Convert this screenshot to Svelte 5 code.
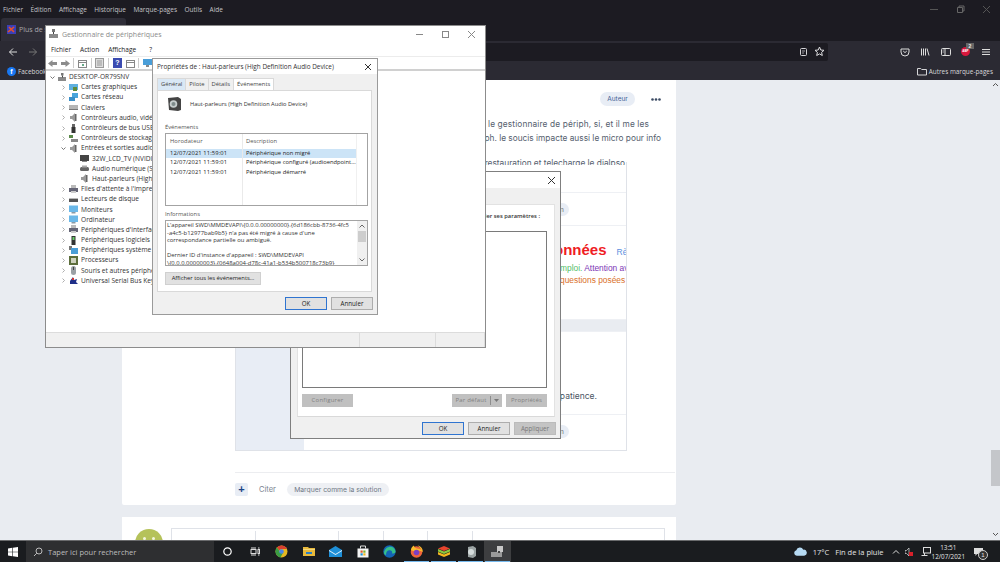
<script>
  const menu = ['Fichier','Édition','Affichage','Historique','Marque-pages','Outils','Aide'];
  const tree = [
    {l:1,c:'>',k:'disp',t:'Cartes graphiques'},
    {l:1,c:'>',k:'net',t:'Cartes réseau'},
    {l:1,c:'>',k:'kbd',t:'Claviers'},
    {l:1,c:'>',k:'spk',t:'Contrôleurs audio, vidéo et jeu'},
    {l:1,c:'>',k:'usb',t:'Contrôleurs de bus USB'},
    {l:1,c:'>',k:'sto',t:'Contrôleurs de stockage'},
    {l:1,c:'v',k:'spk',t:'Entrées et sorties audio'},
    {l:2,c:'',k:'tv',t:'32W_LCD_TV (NVIDIA)'},
    {l:2,c:'',k:'dig',t:'Audio numérique (S/PDIF)'},
    {l:2,c:'',k:'spk',t:'Haut-parleurs (High Definition)'},
    {l:1,c:'>',k:'prn',t:"Files d'attente à l'impression"},
    {l:1,c:'>',k:'dsk',t:'Lecteurs de disque'},
    {l:1,c:'>',k:'disp2',t:'Moniteurs'},
    {l:1,c:'>',k:'disp2',t:'Ordinateur'},
    {l:1,c:'>',k:'prn',t:"Périphériques d'interface"},
    {l:1,c:'>',k:'soft',t:'Périphériques logiciels'},
    {l:1,c:'>',k:'sys',t:'Périphériques système'},
    {l:1,c:'>',k:'cpu',t:'Processeurs'},
    {l:1,c:'>',k:'mouse',t:'Souris et autres périphériques'},
    {l:1,c:'>',k:'uni',t:'Universal Serial Bus Keyboard'},
  ];
  const rows = [
    ['12/07/2021 11:59:01','Périphérique non migré',true],
    ['12/07/2021 11:59:01','Périphérique configuré (audioendpoint...',false],
    ['12/07/2021 11:59:01','Périphérique démarré',false],
  ];
  const editorCells = [84,83,45,44,45];
</script>

<div class="screen">
  <!-- Firefox -->
  <header class="ff">
    <div class="menubar">
      {#each menu as m}<span>{m}</span>{/each}
      <div class="winctl">
        <svg width="9" height="9" viewBox="0 0 9 9"><path d="M0 4.500h8" stroke="#555" /></svg>
        <svg width="9" height="9" viewBox="0 0 9 9" fill="none"><path d="M1.500 2.500h5v5h-5zM3 2.500V1h5v5H6.500" stroke="#666" /></svg>
        <svg width="9" height="9" viewBox="0 0 9 9"><path d="M1 1l7 7M8 1l-7 7" stroke="#555" /></svg>
      </div>
    </div>
    <div class="tabs">
      <div class="tab">
        <svg width="9" height="9" viewBox="0 0 9 9"><rect width="9" height="9" fill="#3a3fb8" /><path d="M1 7L7 2M2 2l5 5" stroke="#e8502a" stroke-width="1.600" /></svg>
        <span>Plus de son</span>
      </div>
    </div>
    <div class="toolbar">
      <svg class="nav" width="10" height="10" viewBox="0 0 10 10" fill="none"><path d="M9 5H1.500M5 1.500L1.500 5 5 8.500" stroke="#ddd" /></svg>
      <svg class="nav" width="10" height="10" viewBox="0 0 10 10" fill="none"><path d="M1 5h7.500M5 1.500L8.500 5 5 8.500" stroke="#777" /></svg>
      <div class="url">
        <svg width="9" height="10" viewBox="0 0 9 10" fill="none"><rect x="1.500" y="1.500" width="6" height="7" rx="1" stroke="#d5d5d8" /><path d="M3 4h3M3 6h2" stroke="#d5d5d8" stroke-width=".7" /></svg>
        <svg width="11" height="11" viewBox="0 0 11 11" fill="none"><path d="M5.500 1l1.300 3 3.200.3-2.400 2.100.7 3.100-2.800-1.600-2.800 1.600.7-3.100L1 4.300 4.200 4z" stroke="#e0e0e3" /></svg>
      </div>
      <div class="tools">
        <svg width="10" height="10" viewBox="0 0 10 10" fill="none"><path d="M1 2h8v3a4 4 0 0 1-8 0zM3.200 4L5 5.600 6.800 4" stroke="#ddd" /></svg>
        <svg width="10" height="10" viewBox="0 0 10 10" fill="none"><path d="M1.500 1.500v7M3.500 1.500v7M5.500 1.500v7M7 1.500l2 7" stroke="#ddd" /></svg>
        <svg width="10" height="10" viewBox="0 0 10 10" fill="none"><rect x=".5" y="1.500" width="9" height="7" rx="1" stroke="#ddd" /><path d="M4 1.500v7" stroke="#ddd" /><path d="M1.500 3h1.500M1.500 5h1.500" stroke="#ddd" stroke-width=".7" /></svg>
        <div class="abp"><span class="abpdot">ABP</span><span class="abpbadge">2</span></div>
        <svg width="10" height="10" viewBox="0 0 10 10" fill="none"><path d="M1 2.500h8M1 5h8M1 7.500h8" stroke="#ddd" /></svg>
      </div>
    </div>
    <div class="bookmarks">
      <span class="bm"><span class="fb">f</span>Facebook</span>
      <span class="bm">
        <svg width="10" height="9" viewBox="0 0 10 9" fill="none"><path d="M.5 1.500h3.200l1 1h4.800v5.500H.5z" stroke="#d5d5d8" /></svg>
        Autres marque-pages
      </span>
    </div>
  </header>

  <!-- Page -->
  <main class="page">
    <article class="card">
      <div class="posthead">
        <span class="auteur">Auteur</span>
        <svg class="dots" width="10" height="3" viewBox="0 0 10 3"><circle cx="1.500" cy="1.500" r="1.300" fill="#3a4a63" /><circle cx="5" cy="1.500" r="1.300" fill="#3a4a63" /><circle cx="8.500" cy="1.500" r="1.300" fill="#3a4a63" /></svg>
      </div>
      <p class="line l1">s le gestionnaire de périph, si, et il me les</p>
      <p class="line l2">ph. le soucis impacte aussi le micro pour info</p>
      <section class="inner">
        <aside class="side"></aside>
        <div class="innermain">
          <div class="ib ib1"><p class="line l3">restauration et telecharge le dialpso</p></div>
          <div class="ib ib2"><span class="minipill">n</span></div>
          <div class="ib ib3">
            <div class="bigline"><span class="red">onnées</span><span class="blue">Règles</span></div>
            <div class="cline first"><span class="green">mploi.</span> <span class="purple">Attention avec</span></div>
            <div class="cline"><span class="orange">questions posées</span></div>
          </div>
          <div class="ib gray"></div>
          <div class="ib ib4"><span class="pat">patience.</span></div>
          <div class="ib ib5"><span class="minipill">n</span></div>
        </div>
      </section>
      <div class="actions">
        <span class="plus">+</span>
        <span class="citer">Citer</span>
        <span class="sol">Marquer comme la solution</span>
      </div>
    </article>
    <article class="card2">
      <span class="avatar"><i></i><i></i></span>
      <div class="editor">
        {#each editorCells as w}<span class="cell" style="width:{w}px"></span>{/each}
      </div>
    </article>
    <div class="scroll">
      <svg class="su" width="7" height="5" viewBox="0 0 7 5" fill="none"><path d="M1 4l2.500-2.500L6 4" stroke="#555" /></svg>
      <div class="thumb"></div>
      <svg class="sd" width="7" height="5" viewBox="0 0 7 5" fill="none"><path d="M1 1l2.500 2.500L6 1" stroke="#555" /></svg>
    </div>
  </main>

  <!-- Sound dialog -->
  <div class="win sound">
    <div class="stitle"><svg width="9" height="9" viewBox="0 0 9 9"><path d="M1 1l7 7M8 1l-7 7" stroke="#333" /></svg></div>
    <div class="spanel">
      <div class="stext">Sélectionner un périphérique de lecture ci-dessous pour modifier ses paramètres :</div>
      <div class="slist"></div>
      <div class="sbtns">
        <span class="dis b1">Configurer</span>
        <span class="grow"></span>
        <span class="dis b2">Par défaut<i></i><svg width="5" height="3" viewBox="0 0 5 3"><path d="M0 0h5L2.500 3z" fill="#777" /></svg></span>
        <span class="dis b3">Propriétés</span>
      </div>
    </div>
    <div class="sfoot">
      <span class="btn ok">OK</span><span class="btn">Annuler</span><span class="btn dis2">Appliquer</span>
    </div>
  </div>

  <!-- Device manager -->
  <div class="win dev">
    <div class="dtitle">
      <svg width="9" height="10" viewBox="0 0 9 10"><rect x="3" y="0" width="3" height="3" fill="#777" /><rect x="0" y="5" width="9" height="4" fill="#8a8a8a" /><rect x="4" y="3" width="1" height="2" fill="#444" /></svg>
      <span class="dt">Gestionnaire de périphériques</span>
      <div class="dctl">
        <svg width="9" height="9" viewBox="0 0 9 9"><path d="M1 4.500h7" stroke="#888" /></svg>
        <svg width="9" height="9" viewBox="0 0 9 9" fill="none"><rect x="1.500" y="1.500" width="6" height="6" stroke="#888" /></svg>
        <svg width="9" height="9" viewBox="0 0 9 9"><path d="M1 1l7 7M8 1l-7 7" stroke="#888" /></svg>
      </div>
    </div>
    <div class="dmenu"><span>Fichier</span><span>Action</span><span>Affichage</span><span>?</span></div>
    <div class="dtool">
      <svg width="9" height="9" viewBox="0 0 9 9"><path d="M0 4.500L4.500 1v2H9v3H4.500v2z" fill="#8b8b8b" /></svg>
      <svg width="9" height="9" viewBox="0 0 9 9"><path d="M9 4.500L4.500 1v2H0v3h4.500v2z" fill="#8b8b8b" /></svg>
      <i></i>
      <svg width="9" height="9" viewBox="0 0 9 9" fill="none"><rect x=".5" y="1.500" width="8" height="7" stroke="#888" /><path d="M.5 3.500h8" stroke="#888" /><rect x="4" y="5" width="2" height="2" fill="#6a8" /></svg>
      <i></i>
      <svg width="9" height="10" viewBox="0 0 9 10" fill="none"><rect x=".5" y=".5" width="8" height="9" fill="#ddd" stroke="#999" /><path d="M2 3h5M2 5h5M2 7h5" stroke="#999" /></svg>
      <i></i>
      <span class="help">?</span>
      <svg width="9" height="9" viewBox="0 0 9 9" fill="none"><rect x=".5" y="1.500" width="8" height="7" stroke="#888" /><path d="M.5 3.500h8" stroke="#888" /></svg>
      <i></i>
      <svg width="10" height="10" viewBox="0 0 10 10"><rect x="0" y="1" width="9" height="6" fill="#4a9ed8" /><rect x="3" y="7" width="3" height="2" fill="#888" /></svg>
    </div>
    <div class="dtree">
      <div class="root">
        <svg class="ch" width="5" height="5" viewBox="0 0 5 5" fill="none"><path d="M.5 1.500L2.500 3.500 4.500 1.500" stroke="#555" stroke-width=".8" /></svg>
        <svg width="8" height="9" viewBox="0 0 8 9"><rect x="3" y="0" width="2.500" height="2.500" fill="#777" /><rect x="0" y="4" width="8" height="4" fill="#8a8a8a" /><rect x="4" y="2.500" width="1" height="2" fill="#444" /></svg>
        <span>DESKTOP-OR79SNV</span>
      </div>
      {#each tree as r}
        <div class="row" class:l2={r.l === 2}>
          {#if r.l === 1}
            {#if r.c === 'v'}
              <svg class="ch" width="5" height="5" viewBox="0 0 5 5" fill="none"><path d="M.5 1.500L2.500 3.500 4.500 1.500" stroke="#555" stroke-width=".8" /></svg>
            {:else}
              <svg class="ch" width="5" height="5" viewBox="0 0 5 5" fill="none"><path d="M1.500.5L3.500 2.500 1.500 4.500" stroke="#999" stroke-width=".8" /></svg>
            {/if}
          {/if}
          <svg class="ic" width="9" height="9" viewBox="0 0 9 9">
            {#if r.k === 'disp'}<rect y="1" width="9" height="6" fill="#5fb0e0" /><rect x="4" y="4" width="4" height="4" fill="#5d8a3a" />
            {:else if r.k === 'net'}<rect x="3" y="0" width="6" height="5" fill="#4aa5dc" /><rect y="4" width="6" height="4" fill="#3a8fc8" />
            {:else if r.k === 'kbd'}<rect y="2" width="9" height="5" fill="#b5b5b5" /><rect y="6" width="9" height="1" fill="#777" />
            {:else if r.k === 'spk'}<path d="M1 3h2l3-3v9L3 6H1z" fill="#9a9a9a" /><rect x="6" y="1" width="1.500" height="7" fill="#666" />
            {:else if r.k === 'usb'}<rect x="3" y="0" width="3" height="3" fill="#666" /><rect x="2.500" y="3" width="4" height="6" fill="#333" />
            {:else if r.k === 'sto'}<rect x="0" y="1" width="4" height="3" fill="#5b8a4a" /><rect x="2" y="5" width="7" height="3" fill="#888" />
            {:else if r.k === 'tv'}<rect y="1" width="9" height="6" fill="#444" /><rect x="2" y="7" width="5" height="1" fill="#888" />
            {:else if r.k === 'dig'}<rect y="3" width="9" height="4" rx="1.500" fill="#666" /><rect x="2" y="1.500" width="5" height="2" fill="#aaa" />
            {:else if r.k === 'prn'}<rect x="2" y="0" width="5" height="3" fill="#bbb" /><rect y="3" width="9" height="4" fill="#667" /><rect x="2" y="6" width="5" height="2" fill="#ccc" />
            {:else if r.k === 'dsk'}<rect y="4" width="9" height="3" fill="#555" /><rect y="3" width="9" height="1" fill="#bbb" />
            {:else if r.k === 'disp2'}<rect y="0.500" width="9" height="6.500" fill="#6bb8e8" /><rect x="2.500" y="7" width="4" height="1.500" fill="#8a9aa5" />
            {:else if r.k === 'soft'}<rect x="2.500" y="0" width="4" height="9" fill="#333" /><rect x="3.500" y="1" width="2" height="3" fill="#6c6" />
            {:else if r.k === 'sys'}<rect y="0" width="3" height="4" fill="#777" /><rect x="2" y="2" width="7" height="6" fill="#4a9ed8" />
            {:else if r.k === 'cpu'}<rect width="9" height="9" fill="#5c6e3c" /><rect x="2" y="2" width="5" height="5" fill="#cfd2c0" />
            {:else if r.k === 'mouse'}<rect x="2" y="0" width="5" height="9" rx="2.500" fill="#9aa0a5" /><rect x="4" y="1" width="1" height="3" fill="#444" />
            {:else}<path d="M1 5l3-4 1 3 3-1-1 3 2 2H1z" fill="#1f2f88" /><rect x="3" y="2" width="2" height="2" fill="#c33" />
            {/if}
          </svg>
          <span>{r.t}</span>
        </div>
      {/each}
    </div>
    <div class="dstatus"><span class="c1"></span><span class="c2"></span><span class="c3"></span></div>
  </div>

  <!-- Properties -->
  <div class="win props">
    <div class="ptitle"><span>Propriétés de : Haut-parleurs (High Definition Audio Device)</span>
      <svg width="8" height="8" viewBox="0 0 8 8"><path d="M1 1l6 6M7 1L1 7" stroke="#333" /></svg>
    </div>
    <div class="ptabs">
      <span class="pt gen">Général</span><span class="pt">Pilote</span><span class="pt">Détails</span><span class="pt act">Événements</span>
    </div>
    <div class="ppanel">
      <div class="phead">
        <svg width="15" height="15" viewBox="0 0 15 15"><path d="M1 2l10-1 3 2v11l-3 1-9-1z" fill="#444" /><circle cx="6.500" cy="8" r="3.800" fill="#c5cccc" /><circle cx="6.500" cy="8" r="2" fill="#7d8a8a" /></svg>
        <span>Haut-parleurs (High Definition Audio Device)</span>
      </div>
      <div class="plabel ev">Événements</div>
      <div class="plist">
        <div class="pmain">
          <div class="prow phrow"><span>Horodateur</span><span>Description</span></div>
          {#each rows as r}
            <div class="prow" class:sel={r[2]}><span>{r[0]}</span><span>{r[1]}</span></div>
          {/each}
          <i class="vl"></i>
        </div>
      </div>
      <div class="plabel inf">Informations</div>
      <div class="pinfo">
        <div class="ptext">L'appareil SWD\MMDEVAPI\{'{'}0.0.0.00000000{'}'}.{'{'}6d186cbb-8736-4fc5<br />-a4c5-b12977bab9b5{'}'} n'a pas été migré à cause d'une<br />correspondance partielle ou ambiguë.<br /><br />Dernier ID d'instance d'appareil : SWD\MMDEVAPI<br />\{'{'}0.0.0.00000003{'}'}.{'{'}0648a004-d78c-41a1-b534b500718c73b9{'}'}</div>
        <div class="psb">
          <svg width="6" height="4" viewBox="0 0 6 4" fill="none"><path d="M.5 3.500L3 1l2.500 2.500" stroke="#444" stroke-width=".8" /></svg>
          <i></i>
          <svg class="dn" width="6" height="4" viewBox="0 0 6 4" fill="none"><path d="M.5.5L3 3 5.500.5" stroke="#444" stroke-width=".8" /></svg>
        </div>
      </div>
      <span class="btn showall">Afficher tous les événements...</span>
    </div>
    <div class="pfoot"><span class="btn ok">OK</span><span class="btn">Annuler</span></div>
  </div>

  <!-- Taskbar -->
  <footer class="task">
    <svg class="start" width="10" height="10" viewBox="0 0 10 10"><path d="M0 1.400L4.300.8v3.900H0zM4.900.7L10 0v4.700H4.900zM0 5.300h4.300v3.900L0 8.600zM4.900 5.300H10V10l-5.100-.7z" fill="#fff" /></svg>
    <div class="search">
      <svg width="10" height="10" viewBox="0 0 10 10" fill="none"><circle cx="6" cy="4" r="3" stroke="#bbb" /><path d="M3.800 6.200L1 9" stroke="#bbb" /></svg>
      <span>Taper ici pour rechercher</span>
    </div>
    <div class="apps">
      <span class="ap"><svg width="9" height="9" viewBox="0 0 9 9" fill="none"><circle cx="4.500" cy="4.500" r="3.700" stroke="#fff" stroke-width="1.200" /></svg></span>
      <span class="ap"><svg width="10" height="9" viewBox="0 0 10 9" fill="none"><path d="M1 1h5M1 8h5M8 1h1.500M8 8h1.500" stroke="#ddd" /><rect x="1" y="2.500" width="5" height="4" stroke="#ddd" /><rect x="8" y="2.500" width="1.500" height="4" stroke="#ddd" /></svg></span>
      <span class="ap"><svg width="13" height="13" viewBox="0 0 13 13"><circle cx="6.500" cy="6.500" r="6" fill="#e5b822" /><path d="M6.500.5A6 6 0 0 1 12 4H6.500a2.500 2.500 0 0 0-2.300 1.500L1.900 2.600A6 6 0 0 1 6.500.5z" fill="#d9402f" /><path d="M1.900 2.600A6 6 0 0 0 5.500 12.400L8 7.800a2.500 2.500 0 0 1-3.800-2.300z" fill="#3a9d45" /><circle cx="6.500" cy="6.500" r="2.300" fill="#4a86e8" /></svg></span>
      <span class="ap"><svg width="12" height="11" viewBox="0 0 12 11"><path d="M0 1h5l1 1h6v8H0z" fill="#e8b93b" /><rect x="3" y="6" width="6" height="2" fill="#2b7fc4" /><rect y="3" width="12" height="1" fill="#f5d77a" /></svg></span>
      <span class="ap"><svg width="13" height="11" viewBox="0 0 13 11"><path d="M0 4L6.500 0 13 4v7H0z" fill="#1e8fd8" /><path d="M0 4l6.500 4L13 4v1L6.500 9 0 5z" fill="#e4f2fb" /></svg></span>
      <span class="ap"><svg width="12" height="13" viewBox="0 0 12 13" fill="none"><rect x=".5" y="3.500" width="11" height="9" fill="#f4f4f4" /><path d="M3.500 3.500V1h5v2.500" stroke="#ddd" /><rect x="3.500" y="5.500" width="2.200" height="2.200" fill="#e25a2b" /><rect x="6.300" y="5.500" width="2.200" height="2.200" fill="#7cb32b" /><rect x="3.500" y="8.300" width="2.200" height="2.200" fill="#1f90d8" /><rect x="6.300" y="8.300" width="2.200" height="2.200" fill="#f2b51e" /></svg></span>
      <span class="ap"><svg width="13" height="13" viewBox="0 0 13 13"><circle cx="6.500" cy="6.500" r="6.200" fill="#1464b4" /><path d="M1 8C1.500 3.500 5 1.500 8 1.800c2.500.3 4.500 2.500 4.500 5 0 1.500-2 2-3.500 1.500 1-2-1-3.500-3-3-2 .5-3 2-3 5C1.800 9.500 1.200 9 1 8z" fill="#35c08a" /></svg></span>
      <span class="ap"><svg width="13" height="13" viewBox="0 0 13 13"><circle cx="6.500" cy="7" r="5.800" fill="#f0653a" /><path d="M1 5c0-2 1.500-4 3-4.500C4 2 5 3 7 3.500c2 .5 3.500 0 4.500 2C11 3.500 9.500 1.500 7.500.5c3.500.5 5.500 3.500 5.300 6.500C11 6 9 5.500 7 6 4 6.500 2 6 1 5z" fill="#fbbd2c" /><circle cx="6.500" cy="7.500" r="2.800" fill="#7b3fc4" /></svg></span>
      <span class="ap"><svg width="12" height="11" viewBox="0 0 12 11"><path d="M6 0l6 2.500L6 5 0 2.500z" fill="#e8442d" /><path d="M0 3l6 2.500L12 3v2.500L6 8 0 5.500z" fill="#8cc63f" /><path d="M0 6l6 2.500L12 6v2.500L6 11 0 8.500z" fill="#f5b81f" /></svg></span>
      <span class="ap"><svg width="10" height="12" viewBox="0 0 10 12"><path d="M2 1l5-1 3 2v8l-3 2-5-1z" fill="#9ba3a3" /><circle cx="5" cy="6" r="3" fill="#d5dcdc" /></svg></span>
      <span class="ap cur"><svg width="13" height="12" viewBox="0 0 13 12"><rect x="6" y="0" width="6" height="6" fill="#c8c8c8" /><rect x="0" y="6" width="11" height="5" fill="#9a9a9a" /><rect x="7" y="5" width="2" height="2" fill="#444" /></svg></span>
    </div>
    <div class="tray">
      <svg width="13" height="9" viewBox="0 0 14 9"><path d="M3 9a3 3 0 0 1-.5-5.900A4 4 0 0 1 10 2.500 3.200 3.200 0 0 1 11 9z" fill="#b5d9f2" /></svg>
      <span class="temp">17°C</span>
      <span class="wx">Fin de la pluie</span>
      <svg class="t1" width="8" height="5" viewBox="0 0 8 5" fill="none"><path d="M1 4.500L4 1.500 7 4.500" stroke="#ddd" /></svg>
      <span class="vol"><svg width="5" height="8" viewBox="0 0 5 8"><path d="M0 2.500h1.500L4 0v8L1.500 5.500H0z" fill="none" stroke="#ddd" stroke-width=".7" /></svg><b></b></span>
      <svg class="t3" width="10" height="9" viewBox="0 0 10 9" fill="none"><rect x="2.500" y=".5" width="7" height="5.500" stroke="#ddd" /><path d="M.5 8.500h6M3.500 6v2.500" stroke="#ddd" /></svg>
      <div class="clock"><span>13:51</span><span>12/07/2021</span></div>
      <span class="notif">
        <svg width="9" height="8" viewBox="0 0 9 8"><path d="M0 0h9v6H3L1.500 8V6H0z" fill="#ddd" /></svg>
        <b>1</b>
      </span>
    </div>
  </footer>
</div>

<style>
  :global(body) { margin: 0; background: #1c1b22; }
  .screen { position: relative; width: 1000px; height: 562px; overflow: hidden; display: flex; flex-direction: column; font-family: "Open Sans", "Noto Sans", sans-serif; }

  .ff { height: 80px; display: flex; flex-direction: column; background: #1c1b22; flex: none; }
  .menubar { height: 18px; display: flex; align-items: center; gap: 7.400px; padding-left: 3px; font-size: 6.500px; color: #c4c4c8; }
  .winctl { margin-left: auto; display: flex; gap: 17px; padding-right: 9px; }
  .tabs { height: 23px; padding-left: 1px; display: flex; align-items: flex-end; }
  .tab { width: 125px; height: 23px; background: #2f2e38; border-radius: 3px 3px 0 0; display: flex; align-items: center; gap: 3px; padding-left: 6px; box-sizing: border-box; font-size: 7px; color: #a8a8ac; }
  .toolbar { height: 21px; background: #2b2a33; display: flex; align-items: center; padding-left: 8px; gap: 10px; }
  .url { width: 680px; height: 18px; background: #1c1b22; border-radius: 2px; display: flex; align-items: center; justify-content: flex-end; gap: 6px; padding-right: 3px; box-sizing: border-box; flex: none; margin-left: auto; }
  .tools { display: flex; align-items: center; gap: 10.300px; width: 172px; padding-left: 72px; padding-right: 8px; box-sizing: border-box; flex: none; margin-left: -10px; }
  .abp { position: relative; width: 10px; height: 10px; }
  .abpdot { display: block; width: 9px; height: 9px; border-radius: 50%; background: #d8173c; color: #fff; font: 700 3px/9px "Liberation Sans", sans-serif; text-align: center; }
  .abpbadge { position: absolute; left: 5px; top: -4px; width: 8px; height: 6px; background: #666; color: #eee; font: 700 5px/6px "Liberation Sans", sans-serif; text-align: center; }
  .bookmarks { height: 18px; background: #2b2a33; display: flex; align-items: center; justify-content: space-between; padding: 0 7px; color: #d8d8da; font-size: 6.400px; }
  .bm { display: flex; align-items: center; gap: 2px; }
  .fb { width: 9px; height: 9px; border-radius: 50%; background: #1877f2; color: #fff; font: 700 7px/10px "Liberation Sans", sans-serif; text-align: center; }

  .page { position: relative; height: 460px; background: #e9ecf1; flex: none; overflow: hidden; font-family: Inter, "Open Sans", sans-serif; }
  .card { margin-left: 122px; width: 554px; height: 425px; background: #fff; box-sizing: border-box; padding: 12px 15px 0 114px; border-radius: 0 0 2px 2px; }
  .posthead { height: 14px; display: flex; align-items: center; justify-content: flex-end; gap: 16px; }
  .auteur { width: 35px; height: 14px; border-radius: 7px; background: #e8edf5; color: #3f5f95; font-size: 6.500px; line-height: 14px; text-align: center; }
  .dots { flex: none; }
  .line { margin: 0; white-space: nowrap; text-align: right; color: #55606e; font-size: 8.300px; }
  .l1 { margin-top: 11px; line-height: 14px; padding-right: 12px; letter-spacing: .14px; }
  .l2 { line-height: 14px; }
  .l3 { width: 100%; font-size: 8.300px; line-height: 9px; height: 6px; overflow: hidden; padding-right: 1px; box-sizing: border-box; margin-top: -3px; }
  .inner { display: flex; margin: 17px 0 0 -1px; height: 289px; border: 1px solid #dfe2e8; border-top: 0; box-sizing: border-box; width: 392px; }
  .side { width: 68px; background: #e8edf5; flex: none; }
  .innermain { flex: 1; display: flex; flex-direction: column; min-width: 0; }
  .ib { border-bottom: 1px solid #eef0f4; display: flex; justify-content: flex-end; box-sizing: border-box; flex: none; }
  .ib1 { height: 31px; align-items: flex-start; }
  .ib2 { height: 33px; align-items: center; }
  .ib3 { height: 94px; flex-direction: column; align-items: flex-end; padding-top: 15px; justify-content: flex-start; font-family: "Liberation Sans", sans-serif; }
  .gray { height: 12px; background: #e9ecf1; }
  .ib4 { height: 83px; align-items: flex-end; padding: 0 29px 13px 0; color: #4a5563; font-size: 8.500px; }
  .ib5 { flex: 1; align-items: flex-start; padding-top: 10px; border-bottom: 0; }
  .minipill { width: 22px; height: 13px; border-radius: 7px; background: #e8edf5; color: #777; font-size: 7px; line-height: 13px; text-align: right; padding-right: 5px; box-sizing: border-box; margin-right: 57px; }
  .bigline { display: flex; align-items: baseline; gap: 10px; white-space: nowrap; width: 72px; overflow: hidden; }
  .red { color: #ef1d24; font-weight: 700; font-size: 15px; }
  .blue { color: #5b8fe0; font-size: 8.500px; }
  .cline { font-size: 8.400px; white-space: nowrap; line-height: 12px; width: 66px; overflow: hidden; }
  .first { margin-top: 4px; }
  .green { color: #55c06a; }
  .purple { color: #7d35b5; }
  .orange { color: #d9702a; }
  .actions { display: flex; align-items: center; margin: 21px 0 0 -1px; width: 440px; height: 32px; border-top: 1px solid #ecedf0; padding-top: 1px; box-sizing: border-box; font-size: 7.500px; color: #7b8490; }
  .plus { width: 13px; height: 13px; background: #e8edf5; border-radius: 2px; color: #1c4587; font: 700 11px/13px "Liberation Sans", sans-serif; text-align: center; margin-right: 11px; }
  .citer { margin-right: 11px; }
  .sol { width: 102px; height: 13px; border-radius: 7px; background: #eef0f4; line-height: 13px; text-align: center; color: #6f7884; font-size: 6.800px; white-space: nowrap; }

  .card2 { position: relative; margin: 12px 0 0 122px; width: 554px; height: 40px; background: #fff; padding: 11px 0 0 49px; box-sizing: border-box; display: flex; }
  .avatar { position: absolute; left: 13px; top: 12px; width: 28px; height: 28px; border-radius: 50%; background: #b5c25a; }
  .avatar i { position: absolute; top: 8px; left: 8px; width: 3px; height: 3px; border-radius: 50%; background: #f3f5df; }
  .avatar i + i { left: 17px; }
  .editor { width: 494px; height: 40px; border: 1px solid #dfe2e8; box-sizing: border-box; display: flex; }
  .cell { display: block; height: 12px; border-right: 1px solid #dfe2e8; box-sizing: border-box; margin-top: 2px; }

  .scroll { position: absolute; right: 0; top: 0; width: 10px; height: 460px; display: flex; flex-direction: column; align-items: center; }
  .su { margin-top: 2px; }
  .sd { position: absolute; bottom: 3px; left: 2px; }
  .thumb { position: absolute; top: 370px; left: 1px; width: 9px; height: 36px; background: #c4c6ca; }

  .win { position: absolute; box-sizing: border-box; font-family: "Open Sans", "Noto Sans", sans-serif; }
  .btn { display: block; width: 42px; height: 13px; background: #e1e1e1; border: 1px solid #adadad; box-sizing: border-box; font-size: 6.200px; line-height: 11px; text-align: center; color: #222; }
  .btn.ok { border-color: #2f74d0; }

  .sound { left: 290px; top: 171px; width: 271px; height: 268px; background: #f0f0f0; border: 1px solid #7f7f7f; display: flex; flex-direction: column; }
  .stitle { height: 16px; background: #fff; display: flex; justify-content: flex-end; align-items: center; padding-right: 4px; }
  .spanel { margin: 16px 5px 0 6px; height: 213px; background: #fff; box-sizing: border-box; padding: 0 7px 0 4px; display: flex; flex-direction: column; border: 1px solid #e2e2e2; border-bottom: 1px solid #d9d9d9; }
  .stext { font-size: 5.800px; color: #333; text-align: right; white-space: nowrap; padding: 7px 7px 0 0; height: 26px; box-sizing: border-box; font-weight: 600; }
  .slist { height: 157px; border: 1px solid #7a7a7a; box-sizing: border-box; background: #fff; }
  .sbtns { display: flex; gap: 4px; margin-top: 6px; }
  .grow { flex: 1; }
  .dis { height: 13px; background: #c0c0c0; color: #808080; font-size: 6px; letter-spacing: .2px; line-height: 13px; text-align: center; display: flex; align-items: center; justify-content: center; gap: 3px; }
  .b1 { width: 51px; }
  .b2 { width: 50px; }
  .b2 i { width: 1px; height: 9px; background: #8d8d8d; }
  .b3 { width: 41px; }
  .sfoot { display: flex; justify-content: flex-end; gap: 4px; padding: 5px 4px 0 0; }
  .dis2 { background: #c4c4c4; color: #777; border-color: #bbb; }

  .dev { left: 45px; top: 25px; width: 441px; height: 323px; background: #fff; border: 1px solid #8c8c8c; display: flex; flex-direction: column; }
  .dtitle { height: 16px; display: flex; align-items: center; padding-left: 3px; gap: 4px; flex: none; font-size: 7px; color: #8a8a8a; }
  .dctl { margin-left: auto; display: flex; gap: 17px; padding-right: 9px; }
  .dmenu { height: 14px; display: flex; align-items: center; gap: 9px; padding-left: 5px; font-size: 6.500px; color: #222; flex: none; }
  .dmenu span:nth-child(4) { margin-left: 4px; }
  .dtool { height: 15px; display: flex; align-items: center; gap: 3.700px; padding-left: 2px; border-top: 1px solid #ececec; border-bottom: 2px solid #d0d0d0; flex: none; box-sizing: border-box; }
  .dtool i { width: 1px; height: 10px; background: #ccc; }
  .help { width: 9px; height: 10px; background: #3b4bb0; color: #fff; font: 700 7px/10px "Liberation Sans", sans-serif; text-align: center; }
  .dtree { flex: 1; padding-top: 1px; color: #333; font-size: 6.600px; overflow: hidden; }
  .root, .row { height: 10.200px; display: flex; align-items: center; white-space: nowrap; line-height: 10px; }
  .root { padding-left: 4px; gap: 3px; }
  .row { padding-left: 15px; }
  .row .ch { margin-right: 3px; flex: none; }
  .row .ic { margin-right: 3px; flex: none; }
  .row.l2 { padding-left: 34px; }
  .dstatus { height: 15px; flex: none; background: #f0f0f0; border-top: 1px solid #dcdcdc; display: flex; box-sizing: border-box; }
  .dstatus span { display: block; height: 100%; border-right: 1px solid #dcdcdc; box-sizing: border-box; }
  .c1 { width: 314px; }
  .c2 { width: 76px; }
  .c3 { width: 49px; }

  .props { left: 152px; top: 58px; width: 226px; height: 257px; background: #f0f0f0; border: 1px solid #9a9a9a; display: flex; flex-direction: column; }
  .ptitle { height: 15px; background: #fff; flex: none; display: flex; align-items: center; justify-content: space-between; padding: 0 5px 0 4px; font-size: 6.400px; color: #333; white-space: nowrap; }
  .ptabs { height: 16px; display: flex; align-items: flex-end; padding-left: 4px; flex: none; font-size: 5.800px; color: #444; }
  .pt { height: 12px; border: 1px solid #d9d9d9; border-bottom: 0; border-left: 0; box-sizing: border-box; padding: 0 3px; line-height: 11px; background: #f0f0f0; }
  .pt.gen { background: #d9e8f5; border-left: 1px solid #d9d9d9; }
  .pt.act { height: 13px; background: #fff; padding: 0 3px; line-height: 11px; position: relative; top: 1px; }
  .ppanel { margin: 0 5px 0 4px; height: 202px; flex: none; background: #fff; border: 1px solid #d9d9d9; box-sizing: border-box; padding: 0 5px 0 7px; font-size: 5.800px; color: #333; position: relative; }
  .phead { display: flex; align-items: center; gap: 8px; padding: 3px 0 0 2px; height: 19px; font-size: 5.700px; }
  .plabel { height: 10px; line-height: 10px; color: #555; }
  .ev { margin-top: 9px; }
  .inf { margin-top: 3px; }
  .plist { margin-top: 1px; width: 203px; height: 73px; border: 1px solid #a3a3a3; box-sizing: border-box; padding-right: 10px; }
  .pmain { position: relative; height: 100%; border-right: 1px solid #f0f0f0; }
  .vl { position: absolute; left: 76px; top: 0; bottom: 0; width: 1px; background: #eaeaea; }
  .prow { height: 9.500px; display: grid; grid-template-columns: 76px 1fr; padding-left: 4px; line-height: 9.500px; white-space: nowrap; color: #222; }
  .prow span:first-child { letter-spacing: .1px; }
  .phrow { height: 14.500px; line-height: 15px; color: #555; }
  .sel { background: #cce4f7; }
  .pinfo { margin-top: 1px; width: 203px; height: 46px; border: 1px solid #a3a3a3; box-sizing: border-box; display: flex; overflow: hidden; }
  .ptext { flex: 1; padding: 1px 0 0 1px; line-height: 7.500px; color: #333; white-space: nowrap; overflow: hidden; font-size: 5.900px; }
  .psb { width: 10px; flex: none; background: #f0f0f0; display: flex; flex-direction: column; align-items: center; position: relative; padding-top: 3px; box-sizing: border-box; }
  .psb i { display: block; width: 8px; height: 11px; background: #cdcdcd; margin-top: 3px; }
  .psb .dn { position: absolute; bottom: 3px; }
  .btn.showall { width: 96px; height: 13px; margin-top: 6px; font-size: 5.800px; border-color: #d0d0d0; }
  .pfoot { display: flex; justify-content: flex-end; gap: 4px; padding: 5px 4px 0 0; }

  .task { flex: none; height: 22px; background: #1a1c1f; border-top: 1px solid #6a6b6d; box-sizing: border-box; display: flex; align-items: center; color: #ddd; }
  .start { margin: 0 8px; }
  .search { width: 188px; height: 21px; background: #2e2f31; display: flex; align-items: center; gap: 5px; padding-left: 7px; box-sizing: border-box; font-size: 7.500px; color: #bdbdbd; flex: none; }
  .apps { display: flex; }
  .ap { width: 27px; height: 21px; display: flex; align-items: center; justify-content: center; box-sizing: border-box; flex: none; position: relative; }
  .ap:nth-child(n+8)::after { content: ""; position: absolute; left: 1px; right: 1px; bottom: 0; height: 1px; background: #76b9ed; }
  .cur { background: #3d3e40; }
  .tray { margin-left: auto; display: flex; align-items: center; font-size: 7.500px; color: #e4e4e4; height: 100%; }
  .temp { margin-left: 6px; }
  .wx { margin-left: 6px; }
  .t1 { margin-left: 8px; }
  .vol { position: relative; width: 10px; margin-left: 5px; display: flex; }
  .vol b { position: absolute; left: 4px; top: 4px; width: 4px; height: 4px; background: #d8202a; }
  .t3 { margin-left: 6px; }
  .clock { margin-left: 1px; display: flex; flex-direction: column; align-items: center; font-size: 6.300px; line-height: 9px; }
  .notif { position: relative; width: 15px; margin-left: 9px; margin-right: 11px; display: flex; }
  .notif b { position: absolute; left: 4px; top: 2px; width: 8px; height: 8px; border: 1px solid #ccc; background: #333; border-radius: 50%; font: 400 6px/8px "Liberation Sans", sans-serif; text-align: center; }
</style>
